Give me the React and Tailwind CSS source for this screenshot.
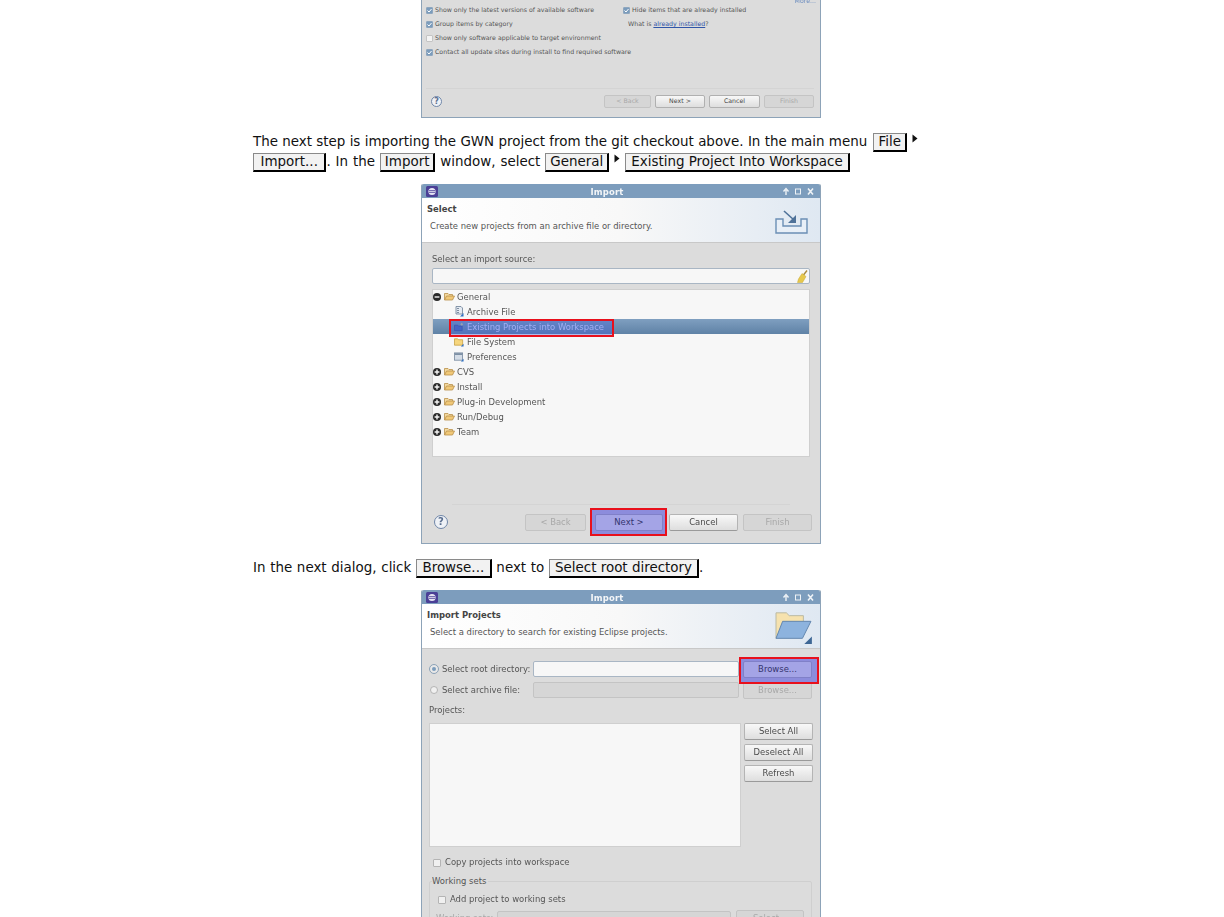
const btnBase = "flex items-center justify-center rounded-[2px] text-[8.45px] leading-none";

function Btn({ w, h = 17, children, state = "normal" }) {
  const looks = {
    normal: "border border-[#b4b4b4] border-b-[#9a9a9a] bg-gradient-to-b from-[#f8f8f8] to-[#dedede] text-[#4a4a4a]",
    disabled: "border border-[#c4c4c4] bg-[#d6d6d6] text-[#a8a8a8]",
    hot: "border border-[#8080c8] bg-[#a4a4e6] text-[#34346e]",
  };
  const sizes = { 69: "w-[69px]", 68: "w-[68px]", 61: "w-[61px]" };
  const heights = { 17: "h-[17px]", 14: "h-[14px]" };
  return <div className={`${btnBase} ${sizes[w]} ${heights[h]} ${looks[state]} flex-none`}>{children}</div>;
}

function Key({ children, pad = "px-[5px]" }) {
  return (
    <span className={`inline-block border border-[#8a8a8a] border-r-2 border-b-2 border-r-black border-b-black bg-[#f2f2f2] ${pad} leading-[16px]`}>
      {children}
    </span>
  );
}

function Arrow() {
  return (
    <svg width="6" height="9" viewBox="0 0 6 9" className="inline-block align-[3px] mx-[5px]">
      <path d="M0.5 0.5 L5.5 4.5 L0.5 8.5 Z" fill="#111" />
    </svg>
  );
}

function EclipseIcon() {
  return (
    <svg width="12" height="11" viewBox="0 0 12 11">
      <rect width="12" height="11" rx="1.5" fill="#4a3f96" />
      <circle cx="6" cy="5.5" r="3.6" fill="#e6e4f4" />
      <path d="M3 4.6h6M3 6.4h6" stroke="#4a3f96" strokeWidth="0.8" />
    </svg>
  );
}

function TitleBar() {
  return (
    <div className="h-[14px] flex-none bg-[#7d9dbd] flex items-center justify-between pl-[4px] pr-[6px] rounded-t-[2px]">
      <EclipseIcon />
      <span className="text-[8.45px] text-[#f4f6f8] tracking-[0.2px] -ml-[6px] mt-[1px] font-semibold">Import</span>
      <svg width="32" height="9" viewBox="0 0 32 9" fill="none" stroke="#eef2f6">
        <path d="M4 8V3M1.5 4.5L4 1.5L6.5 4.5" strokeWidth="1.4" />
        <rect x="13.5" y="2" width="5" height="5" strokeWidth="1" />
        <path d="M26 1.5L31 7.5M31 1.5L26 7.5" strokeWidth="1.6" />
      </svg>
    </div>
  );
}

function Header({ title, sub, children }) {
  return (
    <div className="h-[45px] flex-none relative flex justify-between bg-gradient-to-r from-white via-[#f8f8f8] to-[#dfe8f2] border-b border-[#c8c8c8] pl-[5px] pr-[1px]">
      <div>
        <div className="text-[8.45px] font-bold text-[#444] leading-[11px] mt-[6px]">{title}</div>
        <div className="text-[8.45px] text-[#555] leading-[11px] mt-[6px] ml-[3px]">{sub}</div>
      </div>
      {children}
    </div>
  );
}

function Check({ on }) {
  return (
    <span className={`w-[7px] h-[7px] rounded-[1px] border flex-none flex items-center justify-center ${on ? "bg-[#7b9cbc] border-[#8ea6be]" : "bg-[#f4f4f4] border-[#c4c4c4]"}`}>
      {on && (
        <svg width="5" height="5" viewBox="0 0 5 5">
          <path d="M0.5 2.5L2 4L4.5 1" fill="none" stroke="#fff" strokeWidth="1" />
        </svg>
      )}
    </span>
  );
}

function FolderOpen() {
  return (
    <svg width="11" height="9" viewBox="0 0 11 9" className="flex-none">
      <path d="M0.5 8V1.5h3.5l1 1h3.5V4" fill="#f3d9a0" stroke="#b98f4a" strokeWidth="0.8" />
      <path d="M0.5 8L2.5 4H10.5L8.5 8Z" fill="#f0c878" stroke="#b98f4a" strokeWidth="0.8" />
    </svg>
  );
}

function Toggle({ open }) {
  return (
    <svg width="8" height="8" viewBox="0 0 8 8" className="flex-none">
      <circle cx="4" cy="4" r="4" fill="#2a2a2a" />
      <path d={open ? "M1.6 4H6.4" : "M1.6 4H6.4M4 1.6V6.4"} stroke="#f5f5f5" strokeWidth="1.4" />
    </svg>
  );
}

function ArchiveIcon() {
  return (
    <svg width="10" height="11" viewBox="0 0 10 11">
      <path d="M2 0.5H7L8.5 2V8H2Z" fill="#e4eaf2" stroke="#6b7f96" strokeWidth="0.8" />
      <path d="M4 2V7" stroke="#55677e" strokeWidth="1.4" strokeDasharray="1 1" />
      <path d="M9.5 7V10.5H6Z" fill="#2f6fc0" />
    </svg>
  );
}

function ProjectsIcon() {
  return (
    <svg width="11" height="10" viewBox="0 0 11 10">
      <path d="M0.5 9V3H4L5 4H9V9Z" fill="#4a68b8" stroke="#33488c" strokeWidth="0.7" />
      <path d="M8.5 0.5V3.5M7 2H10" stroke="#e8d890" strokeWidth="0.9" />
    </svg>
  );
}

function FileSystemIcon() {
  return (
    <svg width="11" height="10" viewBox="0 0 11 10">
      <path d="M0.5 8.5V1.5H4L5 2.5H9.5V8.5Z" fill="#f6d67e" stroke="#c49a3a" strokeWidth="0.8" />
      <path d="M10.5 7V10H7.5Z" fill="#2f6fc0" />
    </svg>
  );
}

function PrefsIcon() {
  return (
    <svg width="11" height="10" viewBox="0 0 11 10">
      <rect x="0.5" y="0.5" width="9" height="8" fill="#d4dce6" stroke="#6b7f96" strokeWidth="0.8" />
      <rect x="1" y="1" width="8" height="1.6" fill="#6b7f96" />
      <path d="M10.5 7V10H7.5Z" fill="#2f6fc0" />
    </svg>
  );
}

function TreeGroup({ label, open }) {
  return (
    <div className="h-[15px] flex items-center gap-[3px] text-[8.45px] text-[#555]">
      <Toggle open={open} />
      <FolderOpen />
      <span className="-ml-[1px]">{label}</span>
    </div>
  );
}

function TreeLeaf({ label, icon, selected }) {
  return (
    <div className={`h-[15px] flex items-center pl-[21px] gap-[3px] text-[8.45px] ${selected ? "bg-gradient-to-b from-[#7f9fc0] to-[#5f82a6]" : "text-[#555]"}`}>
      <span className="w-[10px] flex-none flex justify-center">{icon}</span>
      <span className={selected ? "relative z-10 text-[#a3aff5]" : ""}>{label}</span>
    </div>
  );
}

function Help({ small }) {
  const cls = small ? "w-[11px] h-[11px] text-[8px]" : "w-[14px] h-[14px] text-[10px]";
  return (
    <span className={`${cls} rounded-full border border-[#6f86a8] bg-[#eef1f6] text-[#5a6f90] font-bold flex items-center justify-center leading-none`}>?</span>
  );
}

function SmallBtn({ w, disabled, children }) {
  return (
    <div className={`${w} h-[13px] rounded-[2px] flex items-center justify-center leading-none ${disabled ? "border border-[#c4c4c4] bg-[#d6d6d6] text-[#a8a8a8]" : "border border-[#b0b0b0] bg-gradient-to-b from-[#f8f8f8] to-[#dedede] text-[#4a4a4a]"}`}>
      {children}
    </div>
  );
}

function FirstDialog() {
  return (
    <div className="w-[400px] h-[118px] border-x border-b border-[#8da3b8] bg-[#dcdcdc] relative flex flex-col text-[#555] text-[6.25px] leading-[14px] pl-[4px] pr-[6px]">
      <div className="absolute right-[4px] -top-[6px] text-[#6f8fc0]">More...</div>
      <div className="flex pt-[3px]">
        <div className="w-[197px]">
          <div className="flex items-center gap-[2px]"><Check on />Show only the latest versions of available software</div>
          <div className="flex items-center gap-[2px]"><Check on />Group items by category</div>
          <div className="flex items-center gap-[2px]"><Check />Show only software applicable to target environment</div>
          <div className="flex items-center gap-[2px] whitespace-nowrap"><Check on />Contact all update sites during install to find required software</div>
        </div>
        <div>
          <div className="flex items-center gap-[2px]"><Check on />Hide items that are already installed</div>
          <div className="pl-[5px]">What is <span className="text-[#2f55a8] underline">already installed</span>?</div>
        </div>
      </div>
      <div className="mt-[29px] border-t border-[#d4d4d4]" />
      <div className="flex items-center justify-between pt-[6px] pl-[5px]">
        <Help small />
        <div className="flex gap-[4px]">
          <SmallBtn w="w-[47px]" disabled>&lt; Back</SmallBtn>
          <SmallBtn w="w-[50px]">Next &gt;</SmallBtn>
          <SmallBtn w="w-[51px]">Cancel</SmallBtn>
          <SmallBtn w="w-[50px]" disabled>Finish</SmallBtn>
        </div>
      </div>
    </div>
  );
}

function ImportSelectDialog() {
  return (
    <div className="w-[400px] h-[360px] border-x border-b border-[#8da3b8] rounded-t-[2px] bg-[#dcdcdc] flex flex-col">
      <TitleBar />
      <Header title="Select" sub="Create new projects from an archive file or directory.">
        <svg width="48" height="36" viewBox="0 0 48 36" fill="none" className="mt-[8px] -mr-[1px]">
          <path d="M4 13V27H35V13H29V20H11V13Z" fill="#e8eff7" stroke="#6b8fb5" strokeWidth="1.4" />
          <path d="M12 5L22 14" stroke="#4f7299" strokeWidth="1.6" />
          <path d="M24 9V17H16Z" fill="#4f7299" />
        </svg>
      </Header>
      <div className="px-[10px] flex-1 flex flex-col relative">
        <div className="text-[8.45px] text-[#555] leading-[11px] mt-[11px]">Select an import source:</div>
        <div className="mt-[3px] h-[16px] bg-[#f7f7f7] border border-[#a9b6c4] rounded-[2px] flex items-center justify-end pr-[1px]">
          <svg width="11" height="13" viewBox="0 0 11 13">
            <path d="M10 0.5L6.5 5" stroke="#a98a3a" strokeWidth="1.4" />
            <path d="M5 3.5L9 6.5L5.5 12.5H0.5L1.5 9Z" fill="#e6c84c" stroke="#c8a830" strokeWidth="0.5" />
          </svg>
        </div>
        <div className="mt-[5px] h-[168px] bg-[#f7f7f7] border border-[#cfcfcf]">
          <div className="-mt-[1px]">
            <TreeGroup label="General" open />
            <TreeLeaf label="Archive File" icon={<ArchiveIcon />} />
            <TreeLeaf selected label="Existing Projects into Workspace" icon={<ProjectsIcon />} />
            <TreeLeaf label="File System" icon={<FileSystemIcon />} />
            <TreeLeaf label="Preferences" icon={<PrefsIcon />} />
            <TreeGroup label="CVS" />
            <TreeGroup label="Install" />
            <TreeGroup label="Plug-in Development" />
            <TreeGroup label="Run/Debug" />
            <TreeGroup label="Team" />
          </div>
        </div>
        <div className="mt-[47px] border-t border-[#d4d4d4] mx-[20px]" />
        <div className="mt-[9px] flex items-center justify-between pl-[2px] -mr-[2px]">
          <div className="-mt-[2px]"><Help /></div>
          <div className="flex items-center">
            <Btn w={61} state="disabled">&lt; Back</Btn>
            <div className="ml-[9px] relative">
              <div className="absolute -left-[5px] -right-[4px] -top-[6px] -bottom-[5px] border-2 border-[#e8101c] bg-[#8c8cdc]" />
              <div className="relative"><Btn w={68} state="hot">Next &gt;</Btn></div>
            </div>
            <div className="ml-[6px]"><Btn w={69}>Cancel</Btn></div>
            <div className="ml-[5px]"><Btn w={69} state="disabled">Finish</Btn></div>
          </div>
        </div>
        <div className="absolute left-[27px] top-[76px] w-[165px] h-[18px] border-2 border-[#e8101c] bg-[#4060d8]/40" />
      </div>
    </div>
  );
}

function ImportProjectsDialog() {
  return (
    <div className="w-[400px] h-[327px] border-x border-[#8da3b8] rounded-t-[2px] bg-[#dcdcdc] flex flex-col overflow-hidden">
      <TitleBar />
      <Header title="Import Projects" sub="Select a directory to search for existing Eclipse projects.">
        <svg width="40" height="34" viewBox="0 0 42 36" className="mt-[6px] mr-[6px]">
          <path d="M3 30V3H14L17 6H32V12" fill="#f6e2ae" stroke="#b7b7a0" />
          <path d="M3 30L10 12H40L31 30Z" fill="#8db3de" stroke="#5f83ac" />
          <path d="M41 28V36H33Z" fill="#3e6795" />
        </svg>
      </Header>
      <div className="pl-[7px] pr-[7px] flex-1 text-[8.45px] text-[#555] relative whitespace-nowrap">
        <div className="flex items-center mt-[12px] h-[16px]">
          <span className="w-[8px] h-[8px] rounded-full bg-[#7b9cbc] border-2 border-[#e8e8e8] outline outline-[#8da3b8] flex-none ml-[1px]" />
          <span className="w-[96px] pl-[4px] flex-none">Select root directory:</span>
          <div className="w-[206px] h-[16px] bg-[#f7f7f7] border border-[#a9b6c4] rounded-[2px] -ml-[1px]" />
          <div className="ml-[4px] relative">
            <div className="absolute -left-[4px] -right-[7px] -top-[4px] -bottom-[6px] border-2 border-[#e8101c] bg-[#8c8cdc]" />
            <div className="relative"><Btn w={69} state="hot">Browse...</Btn></div>
          </div>
        </div>
        <div className="flex items-center mt-[5px] h-[16px]">
          <span className="w-[8px] h-[8px] rounded-full bg-[#f0f0f0] border border-[#b4b4b4] flex-none ml-[1px]" />
          <span className="w-[96px] pl-[4px] flex-none">Select archive file:</span>
          <div className="w-[206px] h-[16px] bg-[#d6d6d6] border border-[#c4c4c4] rounded-[2px] -ml-[1px]" />
          <div className="ml-[4px]"><Btn w={69} state="disabled">Browse...</Btn></div>
        </div>
        <div className="mt-[7px] leading-[11px]">Projects:</div>
        <div className="flex mt-[7px]">
          <div className="w-[313px] h-[124px] bg-[#f7f7f7] border border-[#cfcfcf]" />
          <div className="ml-[3px] flex flex-col gap-[4px]">
            <Btn w={69}>Select All</Btn>
            <Btn w={69}>Deselect All</Btn>
            <Btn w={69}>Refresh</Btn>
          </div>
        </div>
        <div className="flex items-center gap-[4px] mt-[10px] pl-[4px] leading-[11px]">
          <span className="w-[8px] h-[8px] rounded-[1px] bg-[#f0f0f0] border border-[#b4b4b4]" />
          Copy projects into workspace
        </div>
        <div className="relative mt-[13px] border border-[#cfcfcf] h-[60px] mr-[1px] rounded-[2px] px-[8px] pt-[12px]">
          <span className="absolute left-[2px] -top-[6px] bg-[#dcdcdc] pr-[2px] leading-[11px]">Working sets</span>
          <div className="flex items-center gap-[4px] leading-[11px]">
            <span className="w-[8px] h-[8px] rounded-[1px] bg-[#f0f0f0] border border-[#b4b4b4]" />
            Add project to working sets
          </div>
          <div className="flex items-center mt-[3px] text-[#a8a8a8] -ml-[2px]">
            <span className="w-[61px] flex-none">Working sets:</span>
            <div className="w-[234px] h-[14px] flex-none bg-[#d6d6d6] border border-[#c4c4c4] rounded-[2px]" />
            <div className="ml-[5px] flex-none"><Btn w={68} state="disabled">Select...</Btn></div>
          </div>
        </div>
      </div>
    </div>
  );
}

export default function App() {
  return (
    <div className="h-[917px] overflow-hidden bg-white pl-[253px]" style={{ fontFamily: '"DejaVu Sans", Verdana, sans-serif' }}>
      <div className="w-[736px] text-[13.44px] text-[#111] leading-[20px]">
        <div className="flex justify-center blur-[0.3px]"><FirstDialog /></div>
        <p className="mt-[14px] w-[680px]">
          The next step is importing the GWN project from the git checkout above. In the main menu <span className="ml-[2px]"><Key pad="px-[4px]">File</Key></span>
          <Arrow />
          <br />
          <Key pad="px-[6.5px]">Import...</Key>
          <span className="[word-spacing:0.6px]">. In the </span>
          <Key pad="px-[4px]">Import</Key>
          <span className="[word-spacing:0.6px]"> window, select </span>
          <Key pad="px-[4px]">General</Key>
          <Arrow />
          <Key>Existing Project Into Workspace</Key>
        </p>
        <div className="flex justify-center mt-[12px] blur-[0.3px]"><ImportSelectDialog /></div>
        <p className="mt-[14px]">
          <span className="[word-spacing:0.4px]">In the next dialog, click </span>
          <Key pad="px-[5.5px]">Browse...</Key>
          <span className="[word-spacing:0.4px]"> next to </span>
          <Key>Select root directory</Key>.
        </p>
        <div className="flex justify-center mt-[12px] blur-[0.3px]"><ImportProjectsDialog /></div>
      </div>
    </div>
  );
}
